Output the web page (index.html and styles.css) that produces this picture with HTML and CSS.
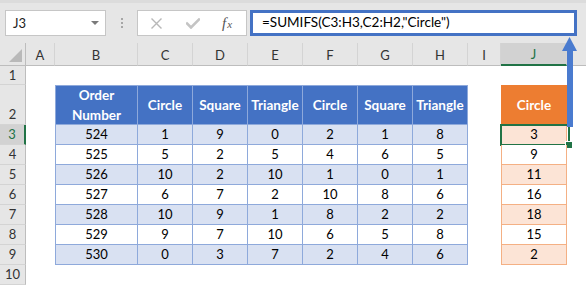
FILE: index.html
```html
<!DOCTYPE html>
<html>
<head>
<link rel="stylesheet" href="styles.css">
</head>
<body>
<div class="app">

  <div class="toolbar">
    <div class="namebox">
      <span>J3</span>
      <span class="drop"></span>
    </div>
    <div class="dots"><i></i><i></i><i></i></div>
    <div class="fxbox">
      <svg class="ico-x" width="11" height="11" viewBox="0 0 11 11"><path d="M1,1 L10,10 M10,1 L1,10"></path></svg>
      <svg class="ico-ok" width="14" height="11" viewBox="0 0 14 11"><path d="M1,5.5 L5,9.5 L13,1.5"></path></svg>
      <span class="fx">f<sub>x</sub></span>
    </div>
    <div class="formula">=SUMIFS(C3:H3,C2:H2,"Circle")</div>
  </div>

  <div class="sheet">
    <!-- column headers -->
    <div class="corner"><span></span></div>
    <div class="ch">A</div><div class="ch">B</div><div class="ch">C</div><div class="ch">D</div>
    <div class="ch">E</div><div class="ch">F</div><div class="ch">G</div><div class="ch">H</div>
    <div class="ch">I</div><div class="ch sel">J</div><div class="ch last"></div>

    <!-- row 1 -->
    <div class="rh">1</div>
    <div class="c"></div><div class="c"></div><div class="c"></div><div class="c"></div><div class="c"></div>
    <div class="c"></div><div class="c"></div><div class="c"></div><div class="c"></div><div class="c"></div><div class="c"></div>

    <!-- row 2 -->
    <div class="rh bottom">2</div>
    <div class="c"></div>
    <div class="t hd first">Order<br>Number</div>
    <div class="t hd">Circle</div><div class="t hd">Square</div><div class="t hd">Triangle</div>
    <div class="t hd">Circle</div><div class="t hd">Square</div><div class="t hd">Triangle</div>
    <div class="c"></div>
    <div class="o hd">Circle</div>
    <div class="c"></div>

    <!-- row 3 -->
    <div class="rh sel">3</div>
    <div class="c"></div>
    <div class="t band first">524</div>
    <div class="t band">1</div><div class="t band">9</div><div class="t band">0</div>
    <div class="t band">2</div><div class="t band">1</div><div class="t band">8</div>
    <div class="c"></div>
    <div class="o band active">3<span class="selbox"></span><span class="handle"></span></div>
    <div class="c"></div>

    <!-- row 4 -->
    <div class="rh">4</div>
    <div class="c"></div>
    <div class="t first">525</div>
    <div class="t">5</div><div class="t">2</div><div class="t">5</div>
    <div class="t">4</div><div class="t">6</div><div class="t">5</div>
    <div class="c"></div>
    <div class="o">9</div>
    <div class="c"></div>

    <!-- row 5 -->
    <div class="rh">5</div>
    <div class="c"></div>
    <div class="t band first">526</div>
    <div class="t band">10</div><div class="t band">2</div><div class="t band">10</div>
    <div class="t band">1</div><div class="t band">0</div><div class="t band">1</div>
    <div class="c"></div>
    <div class="o band">11</div>
    <div class="c"></div>

    <!-- row 6 -->
    <div class="rh">6</div>
    <div class="c"></div>
    <div class="t first">527</div>
    <div class="t">6</div><div class="t">7</div><div class="t">2</div>
    <div class="t">10</div><div class="t">8</div><div class="t">6</div>
    <div class="c"></div>
    <div class="o">16</div>
    <div class="c"></div>

    <!-- row 7 -->
    <div class="rh">7</div>
    <div class="c"></div>
    <div class="t band first">528</div>
    <div class="t band">10</div><div class="t band">9</div><div class="t band">1</div>
    <div class="t band">8</div><div class="t band">2</div><div class="t band">2</div>
    <div class="c"></div>
    <div class="o band">18</div>
    <div class="c"></div>

    <!-- row 8 -->
    <div class="rh">8</div>
    <div class="c"></div>
    <div class="t first">529</div>
    <div class="t">9</div><div class="t">7</div><div class="t">10</div>
    <div class="t">6</div><div class="t">5</div><div class="t">8</div>
    <div class="c"></div>
    <div class="o">15</div>
    <div class="c"></div>

    <!-- row 9 -->
    <div class="rh">9</div>
    <div class="c"></div>
    <div class="t band first">530</div>
    <div class="t band">0</div><div class="t band">3</div><div class="t band">7</div>
    <div class="t band">2</div><div class="t band">4</div><div class="t band">6</div>
    <div class="c"></div>
    <div class="o band">2</div>
    <div class="c"></div>

    <!-- row 10 -->
    <div class="rh">10</div>
    <div class="c"></div><div class="c"></div><div class="c"></div><div class="c"></div><div class="c"></div>
    <div class="c"></div><div class="c"></div><div class="c"></div><div class="c"></div><div class="c"></div><div class="c"></div>
  </div>

  <svg class="arrow" width="16" height="90" viewBox="0 0 16 90">
    <polygon points="7.5,0 0,14 15,14"></polygon>
    <rect x="5" y="13" width="6" height="77"></rect>
  </svg>
</div>
</body>
</html>
```

FILE: styles.css
```css
*, *:before, *:after {
  box-sizing: border-box;
}

body {
  margin: 0;
  background: #fff;
  font: 13px/1 'Lato', 'Liberation Sans', sans-serif;
  color: #000;
}

.app {
  position: relative;
  width: 586px;
  height: 285px;
  overflow: hidden;
}

/* formula bar strip */
.toolbar {
  display: flex;
  align-items: flex-start;
  height: 43px;
  padding: 10px 0 0 5px;
  background: #e6e6e6;
  border-top: 3px solid #dcdcdc;
  padding-top: 7px;
}
.namebox {
  display: flex;
  align-items: center;
  justify-content: space-between;
  width: 101px;
  height: 26px;
  padding: 0 6px 0 7px;
  background: #fff;
  border: 1px solid #c6c6c6;
  color: #222;
}
.namebox .drop {
  width: 0;
  height: 0;
  border-left: 4px solid transparent;
  border-right: 4px solid transparent;
  border-top: 4px solid #7a7a7a;
}
.dots {
  display: flex;
  flex-direction: column;
  align-items: center;
  gap: 2px;
  width: 31px;
  padding-top: 8px;
}
.dots i {
  width: 2px;
  height: 2px;
  background: #a6a6a6;
}
.fxbox {
  display: flex;
  align-items: center;
  width: 110px;
  height: 26px;
  background: #fff;
  border: 1px solid #c6c6c6;
  padding-left: 13px;
}
.fxbox svg {
  fill: none;
  stroke-linecap: square;
}
.ico-x {
  stroke: #b8b8b8;
  stroke-width: 1.4;
}
.ico-ok {
  margin-left: 24px;
  stroke: #c4c4c4;
  stroke-width: 2.6;
  stroke-linecap: butt;
}
.fx {
  margin-left: 22px;
  font: italic 15px 'Liberation Serif', serif;
  color: #555;
}
.fx sub {
  font-size: 11px;
  vertical-align: 0;
  margin-left: 1px;
}
.formula {
  display: flex;
  align-items: center;
  margin-left: 3px;
  width: 327px;
  height: 26px;
  padding-left: 9px;
  background: #fff;
  border: 3px solid #4472c4;
  font-size: 13.5px;
  color: #000;
}

/* grid */
.sheet {
  display: grid;
  grid-template-columns: 26px 29px 83px 55px 55px 55px 55px 55px 55px 33px 66px 1fr;
  grid-template-rows: 23px 19px 40px repeat(8, 20px);
}
.corner,
.ch {
  background: #e6e6e6;
  border-bottom: 1px solid #bdbdbd;
}
.corner {
  position: relative;
  border-right: 1px solid #bdbdbd;
}
.corner span {
  position: absolute;
  right: 3px;
  bottom: 3px;
  width: 0;
  height: 0;
  border-left: 13px solid transparent;
  border-bottom: 13px solid #b9b9b9;
}
.ch {
  display: flex;
  align-items: center;
  justify-content: center;
  padding-top: 2px;
  border-right: 1px solid #d4d4d4;
  color: #333;
}
.ch.sel {
  background: #d2d2d2;
  border-bottom: 2px solid #217346;
  color: #217346;
}
.ch.last {
  border-right: none;
}
.rh {
  display: flex;
  align-items: center;
  justify-content: center;
  background: #e6e6e6;
  border-right: 1px solid #bdbdbd;
  border-bottom: 1px solid #d4d4d4;
  color: #333;
}
.rh.bottom {
  align-items: flex-end;
  padding-bottom: 3px;
}
.rh.sel {
  background: #d2d2d2;
  border-right: 2px solid #217346;
  color: #217346;
}
.c {
  background: #fff;
}

/* blue table */
.t {
  display: flex;
  align-items: center;
  justify-content: center;
  background: #fff;
  border-right: 1px solid #8ea9db;
  border-bottom: 1px solid #8ea9db;
}
.t.first {
  border-left: 1px solid #8ea9db;
}
.t.band {
  background: #d9e1f2;
}
.t.hd,
.o.hd {
  text-align: center;
  line-height: 20px;
  font-weight: bold;
  font-size: 13.5px;
  color: #fff;
}
.t.hd {
  background: #4472c4;
  border-top: 1px solid #8ea9db;
}

/* orange result column */
.o {
  position: relative;
  display: flex;
  align-items: center;
  justify-content: center;
  background: #fff;
  border: 1px solid #f4b084;
  border-top: none;
}
.o.band {
  background: #fce4d6;
}
.o.hd {
  background: #ed7d31;
  border: none;
}
.selbox {
  position: absolute;
  left: -2px;
  right: -4px;
  top: -1px;
  bottom: -2px;
  border: 2px solid #217346;
}
.handle {
  position: absolute;
  right: -6px;
  bottom: -4px;
  width: 6px;
  height: 6px;
  background: #217346;
  outline: 1px solid #fff;
}

.arrow {
  position: absolute;
  left: 562px;
  top: 37px;
  fill: #4a7bcf;
}
```
